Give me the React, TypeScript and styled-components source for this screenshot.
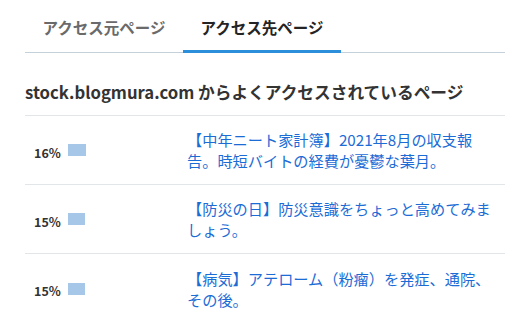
import React from 'react';
import styled, { createGlobalStyle } from 'styled-components';

const GlobalStyle = createGlobalStyle`
    html, body {
        margin: 0;
        padding: 0;
        background: #fff;
    }
    body {
        font-family: "Noto Sans CJK JP", "Noto Sans", sans-serif;
        color: #333;
    }
`;

const Container = styled.div`
    width: 480px;
    margin-left: 25px;
`;

const TabBar = styled.div`
    display: flex;
    height: 52px;
    border-bottom: 1px solid #c4d1da;
`;

const Tab = styled.div<{ $active?: boolean }>`
    width: 158px;
    height: 53px;
    margin-bottom: -1px;
    box-sizing: border-box;
    padding-top: 16px;
    text-align: center;
    font-size: 15.5px;
    line-height: 22px;
    font-weight: bold;
    color: ${p => (p.$active ? '#242424' : '#6a6a6a')};
    box-shadow: ${p => (p.$active ? 'inset 0 -3px 0 #2c8fdb' : 'none')};
`;

const Heading = styled.h2`
    margin: 0;
    padding: 27px 0 11px;
    font-size: 16.7px;
    line-height: 24px;
    font-weight: bold;
    color: #333;
`;

const List = styled.div`
    border-top: 1px solid #e2e6e9;
`;

const Row = styled.div`
    display: flex;
    align-items: center;
    height: 69px;
    box-sizing: border-box;
    border-bottom: 1px solid #e2e6e9;

    &:last-child {
        border-bottom: none;
    }
`;

const RateCell = styled.div`
    display: flex;
    align-items: center;
    gap: 7px;
    width: 162px;
    box-sizing: border-box;
    padding-left: 9px;
`;

const Rate = styled.span`
    font-size: 12.5px;
    font-weight: bold;
    color: #333;
    line-height: 16px;
    margin-top: 5px;
`;

const Bar = styled.span`
    display: block;
    height: 12px;
    background: #a7c7e8;
`;

const Title = styled.a`
    width: 312px;
    font-size: 15.2px;
    line-height: 21px;
    color: #1c6cd6;
    text-decoration: none;
`;

const pages = [
    { rate: 16, title: '【中年ニート家計簿】2021年8月の収支報告。時短バイトの経費が憂鬱な葉月。' },
    { rate: 15, title: '【防災の日】防災意識をちょっと高めてみましょう。' },
    { rate: 15, title: '【病気】アテローム（粉瘤）を発症、通院、その後。' },
];

const App = () => {
    return (
        <>
            <GlobalStyle />
            <Container>
                <TabBar>
                    <Tab>アクセス元ページ</Tab>
                    <Tab $active>アクセス先ページ</Tab>
                </TabBar>
                <Heading>stock.blogmura.com からよくアクセスされているページ</Heading>
                <List>
                    {pages.map((item, index) => (
                        <Row key={index}>
                            <RateCell>
                                <Rate>{item.rate}%</Rate>
                                <Bar style={{ width: item.rate * 1.125 }} />
                            </RateCell>
                            <Title href="#">{item.title}</Title>
                        </Row>
                    ))}
                </List>
            </Container>
        </>
    );
};

export default App;
